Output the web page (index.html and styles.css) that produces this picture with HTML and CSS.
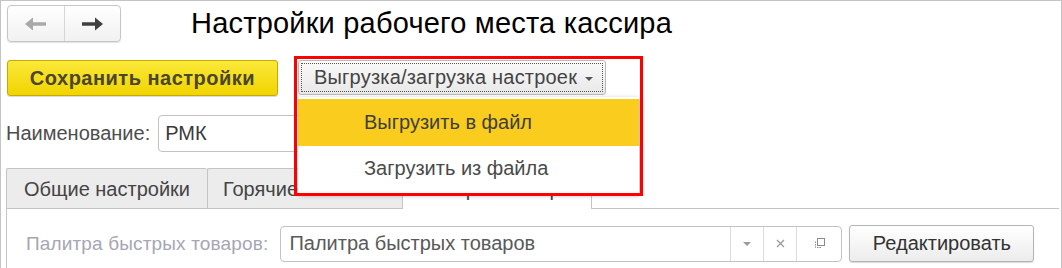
FILE: index.html
```html
<!DOCTYPE html>
<html>
<head>
	<meta charset="utf-8">
	<meta name="viewport" content="width=device-width, initial-scale=1">
	<title>Настройки рабочего места кассира</title>
	<link rel="stylesheet" href="styles.css">
</head>
<body>
	<div class="frame">
		<div class="toolbar">
			<div class="nav">
				<div class="nav-btn">
					<svg width="23" height="14" viewBox="0 0 23 14"><path d="M22 7H8" stroke="#a9a9a9" stroke-width="3.5"/><path d="M1 7L9 0.5V13.5Z" fill="#a9a9a9"/></svg>
				</div>
				<div class="nav-btn">
					<svg width="23" height="14" viewBox="0 0 23 14"><path d="M1 7H15" stroke="#404040" stroke-width="3.5"/><path d="M22 7L14 0.5V13.5Z" fill="#404040"/></svg>
				</div>
			</div>
			<h1 class="title">Настройки рабочего места кассира</h1>
		</div>

		<div class="actions">
			<button type="button" class="btn-save">Сохранить настройки</button>
			<div class="drop-wrap">
				<button type="button" class="btn-drop">Выгрузка/загрузка настроек <span class="caret"></span></button>
				<div class="menu">
					<div class="menu-item active">Выгрузить в файл</div>
					<div class="menu-item">Загрузить из файла</div>
				</div>
				<div class="highlight"></div>
			</div>
		</div>

		<div class="field-row">
			<label class="label">Наименование:</label>
			<div class="input name-input">РМК</div>
		</div>

		<div class="tabs">
			<div class="tab">Общие настройки</div>
			<div class="tab">Горячие клавиши</div>
			<div class="tab current">Быстрые товары</div>
			<div class="tab-rest"></div>
		</div>

		<div class="panel">
			<div class="panel-row">
				<label class="label muted">Палитра быстрых товаров:</label>
				<div class="input select-input">
					<span class="value">Палитра быстрых товаров</span>
					<span class="in-btn"><span class="caret light"></span></span>
					<span class="in-btn">
						<svg width="9" height="9" viewBox="0 0 9 9"><path d="M1 1L8 8M8 1L1 8" stroke="#9a9a9a" stroke-width="1.2"/></svg>
					</span>
					<span class="in-btn">
						<svg width="13" height="13" viewBox="0 0 13 13"><rect x="4.5" y="1.5" width="7" height="7" fill="none" stroke="#8a8a8a"/><path d="M2.5 4.5V10.5H8.5" fill="none" stroke="#8a8a8a" stroke-dasharray="1.5 1"/></svg>
					</span>
				</div>
				<button type="button" class="btn-edit">Редактировать</button>
			</div>
		</div>
	</div>
</body>
</html>
```

FILE: styles.css
```css
body{
	margin: 0;
	background: #fff;
	font-family: "Liberation Sans", Arial, sans-serif;
	font-size: 20px;
	color: #4d4d4d;
}
.frame{
	height: 268px;
	box-sizing: border-box;
	border-top: 1px solid #c4c4c4;
	border-left: 1px solid #c4c4c4;
	border-right: 1px solid #c4c4c4;
	padding: 4px 0 0 5px;
	overflow: hidden;
}
.toolbar{
	display: flex;
	align-items: center;
	height: 37px;
}
.nav{
	display: flex;
	height: 37px;
	width: 114px;
	margin-left: 1px;
	box-sizing: border-box;
	border: 1px solid #c6c6c6;
	border-radius: 4px;
	background: linear-gradient(#ffffff, #f1f1f1);
	box-shadow: 0 1px 1px rgba(0,0,0,0.12);
}
.nav-btn{
	flex: 1;
	display: flex;
	align-items: center;
	justify-content: center;
}
.nav-btn + .nav-btn{
	border-left: 1px solid #d6d6d6;
}
.title{
	margin: 0 0 0 70px;
	font-size: 29px;
	letter-spacing: 0.2px;
	font-weight: normal;
	color: #000;
}
.actions{
	display: flex;
	margin-top: 18px;
	margin-left: 1px;
}
.btn-save{
	width: 271px;
	height: 36px;
	border: 1px solid #c7aa00;
	border-radius: 3px;
	background: linear-gradient(#fbe83a, #f1d400);
	box-shadow: 0 1px 1px rgba(0,0,0,0.15);
	font-family: inherit;
	font-size: 20px;
	letter-spacing: 0.5px;
	font-weight: bold;
	color: #4a4630;
	padding: 0;
}
.drop-wrap{
	position: relative;
	margin-left: 20px;
}
.btn-drop{
	width: 308px;
	height: 35px;
	border: 1px solid #b9b9b9;
	border-radius: 3px;
	outline: 1px dotted #555;
	outline-offset: -4px;
	background: linear-gradient(#fafafa, #e8e8e8);
	font-family: inherit;
	font-size: 20px;
	letter-spacing: 0.2px;
	color: #444;
	text-align: left;
	padding: 0 0 0 15px;
	white-space: nowrap;
}
.caret{
	display: inline-block;
	width: 0;
	height: 0;
	border-left: 4px solid transparent;
	border-right: 4px solid transparent;
	border-top: 4px solid #555;
	vertical-align: middle;
	margin-left: 2px;
}
.caret.light{
	border-top-color: #9a9a9a;
	margin: 0;
}
.menu{
	position: absolute;
	top: 37px;
	left: 0;
	width: 341px;
	background: #fff;
	box-shadow: 1px 2px 5px rgba(0,0,0,0.35);
	z-index: 2;
	padding-top: 2px;
	padding-bottom: 2px;
}
.menu-item{
	height: 45px;
	line-height: 45px;
	padding-left: 66px;
	color: #4a4a4a;
}
.menu-item.active{
	height: 47px;
	line-height: 47px;
	background: #f9cc1e;
	color: #3f3f3f;
}
.highlight{
	position: absolute;
	left: -4px;
	top: -4px;
	width: 343px;
	height: 134px;
	border: 3px solid #ff0000;
	z-index: 3;
}
.field-row{
	display: flex;
	align-items: center;
	margin-top: 19px;
}
.label{
	margin-right: 8px;
}
.label.muted{
	margin-right: 12px;
	font-size: 19px;
	letter-spacing: 0.15px;
	color: #a6a6b4;
}
.input{
	height: 37px;
	box-sizing: border-box;
	border: 1px solid #c2c2c2;
	border-radius: 4px;
	background: #fff;
	display: flex;
	align-items: center;
	color: #3a3a3a;
}
.name-input{
	width: 300px;
	padding-left: 6px;
}
.tabs{
	display: flex;
	margin-top: 16px;
	height: 41px;
}
.tab{
	box-sizing: border-box;
	height: 41px;
	line-height: 41px;
	padding: 0 15px;
	border: 1px solid #c4c4c4;
	border-right: none;
	border-radius: 2px 2px 0 0;
	background: #ececec;
	color: #444;
	white-space: nowrap;
	overflow: hidden;
}
.tab:first-child{
	width: 201px;
	padding-left: 17px;
}
.tab:nth-child(2){
	width: 195px;
}
.tab.current{
	width: 190px;
	background: linear-gradient(#f2f2f2, #fff 60%);
	border-bottom: none;
	border-right: 1px solid #c4c4c4;
	text-align: center;
	padding: 0;
}
.tab-rest{
	flex: 1;
	border-bottom: 1px solid #c4c4c4;
	margin-right: 2px;
}
.panel{
	border-left: 1px solid #c4c4c4;
	margin-right: 2px;
	height: 60px;
	padding: 16px 0 0 19px;
}
.panel-row{
	display: flex;
	align-items: center;
}
.select-input{
	width: 562px;
	height: 36px;
}
.select-input .value{
	flex: 1;
	padding-left: 8px;
	color: #5a5a5a;
}
.in-btn{
	width: 32px;
	height: 100%;
	border-left: 1px solid #dcdcdc;
	display: flex;
	align-items: center;
	justify-content: center;
}
.in-btn:last-child{
	width: 44px;
}
.btn-edit{
	margin-left: 7px;
	width: 185px;
	height: 37px;
	border: 1px solid #b4b4b4;
	border-radius: 3px;
	background: linear-gradient(#ffffff, #ececec);
	box-shadow: 0 1px 1px rgba(0,0,0,0.15);
	font-family: inherit;
	font-size: 20px;
	color: #333;
	padding: 0;
}
```
